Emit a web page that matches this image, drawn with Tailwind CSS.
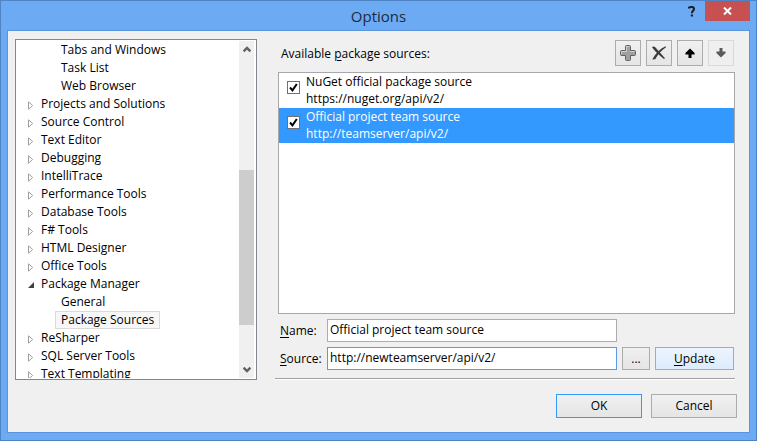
<!DOCTYPE html>
<html lang="en">
<head>
<meta charset="utf-8">
<meta name="viewport" content="width=device-width, initial-scale=1">
<title>Options</title>
<script src="https://cdn.jsdelivr.net/npm/@tailwindcss/browser@4"></script>
</head>
<body class="bg-[#6caaf4] font-['Open_Sans',sans-serif] text-[12px] leading-[18px] text-black">
<div class="flex h-screen flex-col border border-[#4f84c4] px-1.5 pb-[7px]">
  <header class="relative flex h-[29px] shrink-0 items-center justify-center">
    <h1 class="text-[15px] leading-5 text-[#1e2a3c]">Options</h1>
    <div class="absolute top-0 right-0 flex">
      <button type="button" aria-label="Help" class="flex h-5 w-[27px] items-center justify-center">
        <svg width="8" height="11" viewBox="0 0 8 11" fill="none" stroke="#1e1e1e" stroke-width="2"><path d="M1 2.6V1.6C2.5 .7 6 .5 6 3C6 4.8 3.9 4.8 3.9 7.3M2.8 9.6H5"/></svg>
      </button>
      <button type="button" aria-label="Close" class="flex h-5 w-[45px] items-center justify-center bg-[#c75050]">
        <svg width="9" height="8" viewBox="0 0 9 8" stroke="#fff" stroke-width="2"><path d="M1 .5L8 7.5M8 .5L1 7.5"/></svg>
      </button>
    </div>
  </header>

  <main class="flex min-h-0 flex-1 flex-col border border-[#5a94dc] bg-[#f0f0f0] pt-2 pl-[7px]">
    <div class="flex h-[341px] shrink-0">
      <nav aria-label="Option pages" class="flex w-[242px] shrink-0 border border-[#828790] bg-white p-px pr-0.5">
        <ul class="min-w-0 flex-1 overflow-hidden" id="tree"></ul>
        <div class="flex w-[15px] flex-col bg-[#f0f0f0]">
          <button type="button" aria-label="Scroll up" class="flex h-[17px] shrink-0 items-center justify-center">
            <svg width="8" height="7" viewBox="0 0 8 7" fill="none" stroke="#606060" stroke-width="2.4"><path d="M.6 5.4L4 2L7.4 5.4"/></svg>
          </button>
          <div class="flex flex-1 flex-col pt-[112px] pb-9"><div class="flex-1 bg-[#cdcdcd]"></div></div>
          <button type="button" aria-label="Scroll down" class="flex h-[17px] shrink-0 items-center justify-center">
            <svg width="8" height="7" viewBox="0 0 8 7" fill="none" stroke="#606060" stroke-width="2.4"><path d="M.6 1.6L4 5L7.4 1.6"/></svg>
          </button>
        </div>
      </nav>

      <section class="mr-[14px] mb-px ml-[18px] flex min-w-0 flex-1 flex-col border-b border-[#a0a0a0] pl-[3px] shadow-[0_1px_0_#fff]">
        <div class="flex h-[33px] shrink-0 items-start justify-between pt-px pr-px pl-[3px]">
          <span id="sources-label" class="pt-[5px]">Available <u class="underline-offset-2">p</u>ackage sources:</span>
          <div class="flex gap-[5px]">
            <button type="button" aria-label="Add" class="flex size-[26px] items-center justify-center border border-[#acacac] bg-linear-to-b from-[#f0f0f0] to-[#e5e5e5]">
              <svg width="16" height="16" viewBox="0 0 16 16"><path d="M5.500 1.500Q5.500 .5 6.500 .5h3Q10.500 .5 10.500 1.500v4h4Q15.500 5.500 15.500 6.500v3Q15.500 10.500 14.500 10.500h-4v4Q10.500 15.500 9.500 15.500h-3Q5.500 15.500 5.500 14.500v-4h-4Q.5 10.500 .5 9.500v-3Q.5 5.500 1.500 5.500h4z" fill="#a0a0a0" stroke="#606060"/><path d="M6.500 6.500v-5h3M1.500 9V6.500h5M10 6.500h4.500" fill="none" stroke="#d0d0d0"/></svg>
            </button>
            <button type="button" aria-label="Remove" class="flex size-[26px] items-center justify-center border border-[#acacac] bg-linear-to-b from-[#f0f0f0] to-[#e5e5e5]">
              <svg width="16" height="16" viewBox="0 0 16 16" fill="#3c3c3c"><path d="M1 2.200C2 1.200 3.500 1.200 4.500 2.400L14 13.300L13 14C9 11 4.500 7 1 2.200z"/><path d="M14.500 1.300L15 2.200C10.500 5.500 7 9 4.200 14.300L1.200 14.500C4.500 8.500 9 4 14.500 1.300z"/></svg>
            </button>
            <button type="button" aria-label="Move up" class="flex size-[26px] items-center justify-center border border-[#acacac] bg-linear-to-b from-[#f0f0f0] to-[#e5e5e5]">
              <svg width="10" height="10" viewBox="0 0 10 10" fill="#000"><path d="M5 .5L9.600 5V6.500H6.500V10H3.500V6.500H.4V5z"/></svg>
            </button>
            <button type="button" aria-label="Move down" disabled class="flex size-[26px] items-center justify-center border border-[#d9d9d9] bg-[#efefef]">
              <svg width="10" height="10" viewBox="0 0 10 10" fill="#5a5a5a"><path d="M5 9.500L9.600 5V3.500H6.500V0H3.500V3.500H.4V5z"/></svg>
            </button>
          </div>
        </div>

        <ul aria-labelledby="sources-label" class="min-h-0 flex-1 border border-[#a7a7ac] bg-white leading-[17px]">
          <li>
            <label class="flex h-[35px] gap-1.5 pl-2">
              <span class="mt-2 grid size-[13px]">
                <input type="checkbox" checked class="col-start-1 row-start-1 size-[13px] appearance-none border border-[#707070] bg-white">
                <svg class="pointer-events-none col-start-1 row-start-1" width="13" height="13" viewBox="0 0 13 13" fill="none" stroke="#000" stroke-width="2"><path d="M3 6.500L5.500 9.300L9.800 3"/></svg>
              </span>
              <span>NuGet official package source<br>https://nuget.org/api/v2/</span>
            </label>
          </li>
          <li class="bg-[#3399ff] text-white">
            <label class="flex h-[35px] gap-1.5 pl-2">
              <span class="mt-2 grid size-[13px]">
                <input type="checkbox" checked class="col-start-1 row-start-1 size-[13px] appearance-none border border-[#707070] bg-white">
                <svg class="pointer-events-none col-start-1 row-start-1" width="13" height="13" viewBox="0 0 13 13" fill="none" stroke="#000" stroke-width="2"><path d="M3 6.500L5.500 9.300L9.800 3"/></svg>
              </span>
              <span>Official project team source<br>http://teamserver/api/v2/</span>
            </label>
          </li>
        </ul>

        <form class="grid shrink-0 grid-cols-[42px_1fr_28px_79px] gap-x-[5px] gap-y-[5px] pt-[5px] pr-px pb-2 pl-0.5">
          <label for="name" class="self-center"><u class="underline-offset-2">N</u>ame:</label>
          <input id="name" type="text" value="Official project team source" class="h-[23px] min-w-0 border border-[#abadb3] bg-white px-0.5 pb-0.5 outline-none">
          <label for="source" class="col-start-1 self-center"><u class="underline-offset-2">S</u>ource:</label>
          <input id="source" type="text" value="http://newteamserver/api/v2/" class="h-[23px] min-w-0 border border-[#569de5] bg-white px-0.5 pb-0.5 outline-none">
          <button type="button" aria-label="Browse" class="h-[23px] border border-[#acacac] bg-linear-to-b from-[#f0f0f0] to-[#e5e5e5]">...</button>
          <button type="button" class="h-[23px] border border-[#7eb4ea] bg-linear-to-b from-[#ecf4fc] to-[#dcecfc]"><u class="underline-offset-2">U</u>pdate</button>
        </form>
      </section>
    </div>

    <footer class="flex justify-end gap-[9px] pt-[14px] pr-3">
      <button type="button" class="h-6 w-[86px] border border-[#3399ff] bg-linear-to-b from-[#f0f0f0] to-[#e5e5e5]">OK</button>
      <button type="button" class="h-6 w-[86px] border border-[#acacac] bg-linear-to-b from-[#f0f0f0] to-[#e5e5e5]">Cancel</button>
    </footer>
  </main>
</div>

<template id="leaf"><li class="flex h-[18px] pl-[38px]"><a href="#" class="border border-transparent px-[5px] leading-[16px] aria-[current=page]:border-[#dadada] aria-[current=page]:bg-[#f7f7f7]"></a></li></template>
<template id="branch"><li class="flex h-[18px] items-center pl-[11px]"><svg class="mt-0.5 mr-[7px] shrink-0" width="6" height="9" viewBox="0 0 6 9" fill="#fff" stroke="#a0a0a0"><path d="M.5 .8V8.200L4.700 4.500z"/></svg><a href="#"></a></li></template>
<template id="open"><li class="flex h-[18px] items-center pl-[11px]"><svg class="mt-0.5 mr-[7px] shrink-0" width="6" height="6" viewBox="0 0 6 6" fill="#404040"><path d="M6 0V6H0z"/></svg><a href="#"></a></li></template>
<script>
  const pages = [
    ["leaf", "Tabs and Windows"], ["leaf", "Task List"], ["leaf", "Web Browser"],
    ["branch", "Projects and Solutions"], ["branch", "Source Control"], ["branch", "Text Editor"],
    ["branch", "Debugging"], ["branch", "IntelliTrace"], ["branch", "Performance Tools"],
    ["branch", "Database Tools"], ["branch", "F# Tools"], ["branch", "HTML Designer"],
    ["branch", "Office Tools"], ["open", "Package Manager"], ["leaf", "General"],
    ["leaf", "Package Sources"], ["branch", "ReSharper"], ["branch", "SQL Server Tools"],
    ["branch", "Text Templating"]
  ];
  for (const [kind, title] of pages) {
    const row = document.getElementById(kind).content.cloneNode(true);
    const link = row.querySelector("a");
    link.textContent = title;
    if (title === "Package Sources") link.setAttribute("aria-current", "page");
    document.getElementById("tree").append(row);
  }
</script>
</body>
</html>
